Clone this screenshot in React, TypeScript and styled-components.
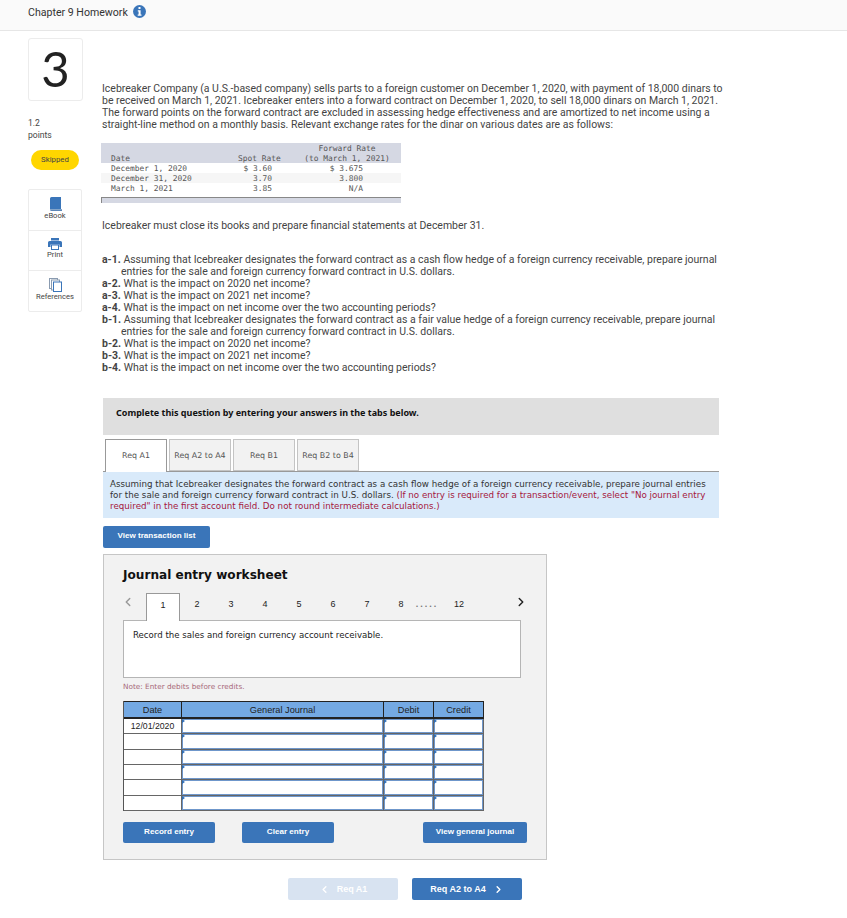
import React from 'react';
import styled, { createGlobalStyle } from 'styled-components';
import { ChevronLeft, ChevronRight } from 'lucide-react';

const GlobalStyle = createGlobalStyle`
  html, body { margin: 0; padding: 0; background: #fff; }
  body { font-family: Roboto, "Liberation Sans", sans-serif; color: #333; }
  * { box-sizing: border-box; }
`;

const Page = styled.div`
  width: 847px;
  height: 918px;
  overflow: hidden;
`;

const TopBar = styled.header`
  height: 31px;
  padding: 5px 0 0 28px;
  background: #fafafa;
  border-bottom: 1px solid #e6e6e6;
  display: flex;
  align-items: flex-start;
  gap: 5px;
  font-size: 10.6px;
  line-height: 15px;
  color: #333;
`;

const Body = styled.div`
  display: flex;
`;

const Side = styled.aside`
  width: 102px;
  padding: 7px 0 0 28px;
  flex: none;
`;

const NumberBox = styled.div`
  width: 55px;
  height: 63px;
  border: 1px solid #ececec;
  border-radius: 3px;
  font-family: Lato, sans-serif;
  font-size: 49px;
  line-height: 59px;
  text-align: center;
  color: #222;
`;

const Points = styled.div`
  margin-top: 16px;
  font-size: 8.6px;
  line-height: 12px;
  color: #444;
`;

const Pill = styled.div`
  margin: 9px 0 0 3px;
  width: 48px;
  height: 20px;
  border-radius: 10px;
  background: #ffd600;
  font-size: 7.8px;
  line-height: 20px;
  text-align: center;
  color: #444;
`;

const Tools = styled.div`
  margin-top: 19px;
  width: 54px;
  height: 123px;
  display: flex;
  flex-direction: column;
  border: 1px solid #ececec;
  border-radius: 2px;
`;

const Tool = styled.div`
  flex: 1;
  padding-top: 7px;
  display: flex;
  flex-direction: column;
  align-items: center;
  gap: 0;
  font-size: 7.6px;
  line-height: 10px;
  color: #444;
  & + & { border-top: 1px solid #ececec; }
`;

const Main = styled.main`
  width: 745px;
  padding-top: 52px;
`;

const Para = styled.p`
  margin: 0;
  width: 630px;
  font-size: 10.48px;
  line-height: 12px;
  color: #444;
  white-space: nowrap;
`;

const RateTable = styled.div`
  margin: 12px 0 0 -1px;
  width: 300px;
  font-family: "DejaVu Sans Mono", monospace;
  font-size: 7.9px;
  line-height: 12px;
  color: #555;
`;

const RateRow = styled.div<{ $bg?: string }>`
  display: grid;
  grid-template-columns: 127px 55px 108px;
  height: 10px;
  padding-left: 10px;
  background: ${p => p.$bg || '#fff'};
  white-space: pre;
`;

const RateCell = styled.span<{ $center?: boolean; $right?: number }>`
  text-align: ${p => (p.$center ? 'center' : p.$right ? 'right' : 'left')};
  padding-right: ${p => p.$right || 0}px;
`;

const RateFoot = styled.div`
  margin-top: 4px;
  height: 6px;
  background: #d5d8e3;
  border-top: 1px solid #888;
  border-left: 1px solid #888;
`;

const Closing = styled(Para)`
  margin-top: 17px;
`;

const Questions = styled.div`
  margin-top: 22px;
`;

const Question = styled.div`
  font-size: 10.48px;
  line-height: 12px;
  color: #444;
  white-space: nowrap;
`;

const Cont = styled(Question)`
  padding-left: 19px;
`;

const Tag = styled.b`
  font-weight: 700;
`;

const Notice = styled.div`
  margin: 24px 0 0 1px;
  width: 616px;
  height: 37px;
  padding-left: 13px;
  background: #dfdfdf;
  font-family: "Noto Sans", Tahoma, sans-serif;
  font-size: 9px;
  font-weight: 700;
  line-height: 30px;
  color: #111;
`;

const Tabs = styled.div`
  margin: 4px 0 0 1px;
  width: 616px;
  height: 33px;
  padding-left: 2px;
  display: flex;
  gap: 2px;
  border-bottom: 1px solid #999;
`;

const TabButton = styled.div<{ $active?: boolean }>`
  width: 62px;
  height: ${p => (p.$active ? 33 : 32)}px;
  border: 1px solid ${p => (p.$active ? '#999' : '#c4c4c4')};
  border-bottom: ${p => (p.$active ? '0' : '1px solid #c4c4c4')};
  background: ${p => (p.$active ? '#fff' : '#f2f2f2')};
  font-family: "DejaVu Sans", Verdana, sans-serif;
  font-size: 7.9px;
  line-height: 31px;
  text-align: center;
  color: #555;
  white-space: nowrap;
  z-index: 1;
`;

const Instruction = styled.div`
  margin-left: 1px;
  width: 616px;
  height: 46px;
  padding: 7px 0 0 7px;
  background: #d9eafa;
  font-family: "DejaVu Sans", Verdana, sans-serif;
  font-size: 8.72px;
  line-height: 11px;
  color: #333;
  white-space: nowrap;
`;

const Warn = styled.span`
  color: #a5173c;
`;

const Btn = styled.div<{ $w: number }>`
  width: ${p => p.$w}px;
  height: 21px;
  border-radius: 2px;
  background: #3a75b9;
  color: #fff;
  font-family: "Liberation Sans", Arial, sans-serif;
  font-size: 8.1px;
  font-weight: 700;
  line-height: 20px;
  text-align: center;
`;

const ListBtn = styled(Btn)`
  margin: 8px 0 0 1px;
  height: 22px;
`;

const Panel = styled.section`
  margin: 6px 0 0 1px;
  width: 444px;
  height: 306px;
  padding: 12px 0 0 19px;
  background: #f2f2f2;
  border: 1px solid #c6c6c6;
`;

const PanelTitle = styled.h2`
  margin: 0;
  height: 26px;
  font-family: "DejaVu Sans", Verdana, sans-serif;
  font-size: 12.1px;
  font-weight: 700;
  line-height: 17px;
  color: #111;
`;

const Pager = styled.div`
  position: relative;
  height: 27px;
  width: 400px;
  display: flex;
  font-family: "Liberation Sans", Arial, sans-serif;
  font-size: 9px;
  color: #222;
`;

const PageNum = styled.div<{ $active?: boolean; $w?: number }>`
  width: ${p => p.$w || 34}px;
  height: ${p => (p.$active ? 28 : 27)}px;
  line-height: 22px;
  text-align: center;
  flex: none;
  ${p => p.$active && `
    background: #fff;
    border: 1px solid #999;
    border-bottom: 0;
    z-index: 1;
  `}
`;

const PagerGap = styled.div`
  width: 23px;
  flex: none;
`;

const Dots = styled.div`
  width: 24px;
  flex: none;
  margin: 0 3px 0 -3px;
  line-height: 22px;
  font-weight: 700;
  letter-spacing: 2px;
  color: #777;
  text-align: center;
`;

const PagerArrow = styled.div`
  position: absolute;
  top: 2px;
  left: 391px;
  color: #222;
`;

const PrevArrow = styled.div`
  width: 0;
  color: #999;
  position: relative;
  left: -2px;
  top: 2px;
  flex: none;
`;

const Prompt = styled.div`
  width: 398px;
  height: 58px;
  padding: 8px 9px;
  background: #fff;
  border: 1px solid #b5b5b5;
  font-family: "DejaVu Sans", Verdana, sans-serif;
  font-size: 8.6px;
  line-height: 12px;
  color: #222;
`;

const Note = styled.div`
  margin-top: 4px;
  height: 19px;
  font-family: "DejaVu Sans", Verdana, sans-serif;
  font-size: 7.3px;
  line-height: 10px;
  color: #a86a7a;
`;

const Journal = styled.div`
  width: 361px;
  display: grid;
  grid-template-columns: 58px 202px 50px 50px;
  border-left: 1px solid #555;
  font-family: "Liberation Sans", Arial, sans-serif;
  font-size: 8.7px;
  color: #222;
`;

const HeadCell = styled.div`
  height: 18px;
  background: #74a9e3;
  border: 1px solid #222;
  border-width: 1px 1px 2px 0;
  font-size: 9.2px;
  line-height: 16px;
  text-align: center;
`;

const DateCell = styled.div<{ $h: number }>`
  height: ${p => p.$h}px;
  background: #fff;
  border-bottom: 1px solid #666;
  border-right: 1px solid #666;
  line-height: 14px;
  text-align: center;
`;

const EntryCell = styled.div<{ $h: number }>`
  position: relative;
  height: ${p => p.$h}px;
  background: #fff;
  border-right: 1px solid #666;
  border-bottom: 1px solid #666;
  box-shadow: inset 0 0 0 1px #6f97cb;
  &::before {
    content: '';
    position: absolute;
    top: 0;
    left: 0;
    border-left: 3px solid #2f6db5;
    border-top: 2px solid transparent;
    border-bottom: 2px solid transparent;
  }
`;

const JournalActions = styled.div`
  margin-top: 11px;
  display: flex;
`;

const ClearBtn = styled(Btn)`
  margin: 0 89px 0 27px;
`;

const BottomNav = styled.nav`
  margin: 18px 0 0 186px;
  display: flex;
  gap: 14px;
`;

const NavBtn = styled.div<{ $off?: boolean }>`
  width: 110px;
  height: 22px;
  border-radius: 2px;
  background: ${p => (p.$off ? '#d8e3f1' : '#3a75b9')};
  color: #fff;
  font-family: "Liberation Sans", Arial, sans-serif;
  font-size: 9px;
  font-weight: 700;
  display: flex;
  align-items: center;
  justify-content: center;
  gap: 7px;
`;

const rates = [
  { date: 'December 1, 2020', spot: '$ 3.60', fwd: '$ 3.675', bg: '#fff' },
  { date: 'December 31, 2020', spot: '3.70', fwd: '3.800', bg: '#f6f6f6' },
  { date: 'March 1, 2021', spot: '3.85', fwd: 'N/A', bg: '#fff' },
];

const rowHeights = [15, 16, 15, 15, 16, 15];

function InfoIcon() {
  return (
    <svg width="13" height="13" viewBox="0 0 13 13">
      <circle cx="6.5" cy="6.5" r="6.5" fill="#3a75b9" />
      <rect x="5.5" y="2" width="2" height="2" fill="#fff" />
      <path d="M4.8 5.2h2.8v4.3h.9v1.2H4.7V9.5h.9V6.4h-.8z" fill="#fff" />
    </svg>
  );
}

function BookIcon() {
  return (
    <svg width="13" height="14" viewBox="0 0 13 14">
      <path d="M1 1.5A1.5 1.5 0 0 1 2.5 0H12v12H1z" fill="#3a75b9" />
      <path d="M1 12.2h12V14H2.5A1.5 1.5 0 0 1 1 12.5z" fill="#5b86b8" />
    </svg>
  );
}

function PrintIcon() {
  return (
    <svg width="14" height="12" viewBox="0 0 14 12">
      <rect x="3" y="0" width="8" height="2.5" fill="#3a75b9" />
      <path d="M0 4.5A1.5 1.5 0 0 1 1.5 3h11A1.5 1.5 0 0 1 14 4.5V9h-2.5V6.500h-9V9H0z" fill="#3a75b9" />
      <rect x="3.500" y="7" width="7" height="4.500" fill="#fff" stroke="#3a75b9" />
    </svg>
  );
}

function CopyIcon() {
  return (
    <svg width="13" height="14" viewBox="0 0 13 14" fill="#fff">
      <rect x="0.500" y="0.500" width="8" height="10" stroke="#8a9bb0" />
      <rect x="2.500" y="2" width="8" height="10" stroke="#8a9bb0" />
      <rect x="4.500" y="4" width="8" height="9.500" stroke="#3a75b9" />
    </svg>
  );
}

export default function App() {
  return (
    <Page>
      <GlobalStyle />
      <TopBar>
        Chapter 9 Homework
        <InfoIcon />
      </TopBar>
      <Body>
        <Side>
          <NumberBox>3</NumberBox>
          <Points>
            1.2
            <br />
            points
          </Points>
          <Pill>Skipped</Pill>
          <Tools>
            <Tool><BookIcon />eBook</Tool>
            <Tool><PrintIcon />Print</Tool>
            <Tool><CopyIcon />References</Tool>
          </Tools>
        </Side>
        <Main>
          <Para>
            Icebreaker Company (a U.S.-based company) sells parts to a foreign customer on December 1, 2020, with payment of 18,000 dinars to
            <br />
            be received on March 1, 2021. Icebreaker enters into a forward contract on December 1, 2020, to sell 18,000 dinars on March 1, 2021.
            <br />
            The forward points on the forward contract are excluded in assessing hedge effectiveness and are amortized to net income using a
            <br />
            straight-line method on a monthly basis. Relevant exchange rates for the dinar on various dates are as follows:
          </Para>
          <RateTable>
            <RateRow $bg="#d5d8e3">
              <RateCell />
              <RateCell />
              <RateCell $center>Forward Rate</RateCell>
            </RateRow>
            <RateRow $bg="#d5d8e3">
              <RateCell>Date</RateCell>
              <RateCell>Spot Rate</RateCell>
              <RateCell $center>(to March 1, 2021)</RateCell>
            </RateRow>
            {rates.map(r => (
              <RateRow key={r.date} $bg={r.bg}>
                <RateCell>{r.date}</RateCell>
                <RateCell $right={21}>{r.spot}</RateCell>
                <RateCell $right={38}>{r.fwd}</RateCell>
              </RateRow>
            ))}
            <RateFoot />
          </RateTable>
          <Closing>Icebreaker must close its books and prepare financial statements at December 31.</Closing>
          <Questions>
            <Question><Tag>a-1.</Tag> Assuming that Icebreaker designates the forward contract as a cash flow hedge of a foreign currency receivable, prepare journal</Question>
            <Cont>entries for the sale and foreign currency forward contract in U.S. dollars.</Cont>
            <Question><Tag>a-2.</Tag> What is the impact on 2020 net income?</Question>
            <Question><Tag>a-3.</Tag> What is the impact on 2021 net income?</Question>
            <Question><Tag>a-4.</Tag> What is the impact on net income over the two accounting periods?</Question>
            <Question><Tag>b-1.</Tag> Assuming that Icebreaker designates the forward contract as a fair value hedge of a foreign currency receivable, prepare journal</Question>
            <Cont>entries for the sale and foreign currency forward contract in U.S. dollars.</Cont>
            <Question><Tag>b-2.</Tag> What is the impact on 2020 net income?</Question>
            <Question><Tag>b-3.</Tag> What is the impact on 2021 net income?</Question>
            <Question><Tag>b-4.</Tag> What is the impact on net income over the two accounting periods?</Question>
          </Questions>
          <Notice>Complete this question by entering your answers in the tabs below.</Notice>
          <Tabs>
            <TabButton $active>Req A1</TabButton>
            <TabButton>Req A2 to A4</TabButton>
            <TabButton>Req B1</TabButton>
            <TabButton>Req B2 to B4</TabButton>
          </Tabs>
          <Instruction>
            Assuming that Icebreaker designates the forward contract as a cash flow hedge of a foreign currency receivable, prepare journal entries
            <br />
            for the sale and foreign currency forward contract in U.S. dollars. <Warn>(If no entry is required for a transaction/event, select "No journal entry</Warn>
            <br />
            <Warn>required" in the first account field. Do not round intermediate calculations.)</Warn>
          </Instruction>
          <ListBtn $w={107}>View transaction list</ListBtn>
          <Panel>
            <PanelTitle>Journal entry worksheet</PanelTitle>
            <Pager>
              <PrevArrow><ChevronLeft size={14} strokeWidth={2.5} /></PrevArrow>
              <PagerGap />
              <PageNum $active>1</PageNum>
              {['2', '3', '4', '5', '6', '7', '8'].map(n => (
                <PageNum key={n}>{n}</PageNum>
              ))}
              <Dots>.....</Dots>
              <PageNum>12</PageNum>
              <PagerArrow><ChevronRight size={14} strokeWidth={2.5} /></PagerArrow>
            </Pager>
            <Prompt>Record the sales and foreign currency account receivable.</Prompt>
            <Note>Note: Enter debits before credits.</Note>
            <Journal>
              <HeadCell>Date</HeadCell>
              <HeadCell>General Journal</HeadCell>
              <HeadCell>Debit</HeadCell>
              <HeadCell>Credit</HeadCell>
              {rowHeights.map((h, i) => (
                <React.Fragment key={i}>
                  <DateCell $h={h}>{i === 0 ? '12/01/2020' : ''}</DateCell>
                  <EntryCell $h={h} />
                  <EntryCell $h={h} />
                  <EntryCell $h={h} />
                </React.Fragment>
              ))}
            </Journal>
            <JournalActions>
              <Btn $w={92}>Record entry</Btn>
              <ClearBtn $w={92}>Clear entry</ClearBtn>
              <Btn $w={104}>View general journal</Btn>
            </JournalActions>
          </Panel>
          <BottomNav>
            <NavBtn $off><ChevronLeft size={11} strokeWidth={3} />Req A1</NavBtn>
            <NavBtn>Req A2 to A4<ChevronRight size={11} strokeWidth={3} /></NavBtn>
          </BottomNav>
        </Main>
      </Body>
    </Page>
  );
}
